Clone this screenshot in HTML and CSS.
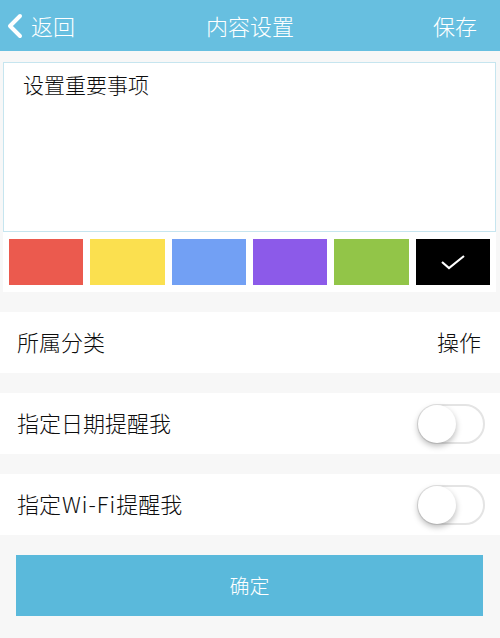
FILE: index.html
```html
<!DOCTYPE html>
<html lang="zh-CN">
<head>
  <meta charset="UTF-8">
  <meta name="viewport" content="width=device-width, initial-scale=1.0">
  <title>内容设置</title>
  <link rel="stylesheet" href="styles.css">
</head>
<body>
  <header class="topbar">
    <div class="back">
      <svg class="chevron" width="18" height="26" viewBox="0 0 18 26">
        <polyline points="14,3 4,13 14,23" fill="none" stroke="#fff" stroke-width="4" stroke-linecap="round" stroke-linejoin="round"/>
      </svg>
      <span>返回</span>
    </div>
    <h1 class="title">内容设置</h1>
    <div class="save">保存</div>
  </header>

  <section class="editor">
    <p class="editor-text">设置重要事项</p>
  </section>

  <section class="swatches">
    <div class="swatch red"></div>
    <div class="swatch yellow"></div>
    <div class="swatch blue"></div>
    <div class="swatch purple"></div>
    <div class="swatch green"></div>
    <div class="swatch black">
      <svg width="26" height="16" viewBox="0 0 26 16">
        <polyline points="2,8 9,14 24,2" fill="none" stroke="#fff" stroke-width="2.2"/>
      </svg>
    </div>
  </section>

  <div class="row">
    <span class="label">所属分类</span>
    <span class="value">操作</span>
  </div>

  <div class="row">
    <span class="label">指定日期提醒我</span>
    <div class="toggle"><div class="knob"></div></div>
  </div>

  <div class="row">
    <span class="label">指定<span class="latin">Wi-Fi</span>提醒我</span>
    <div class="toggle"><div class="knob"></div></div>
  </div>

  <button class="confirm">确定</button>
</body>
</html>
```

FILE: styles.css
```css
* {
  margin: 0;
  padding: 0;
  box-sizing: border-box;
}

body {
  font-family: "Noto Sans CJK SC", "Noto Sans", sans-serif;
  font-weight: 300;
  background-color: #f7f7f7;
  color: #0d0d0d;
}

/* barre du haut */
.topbar {
  height: 51px;
  background: #67bfe0;
  color: #fff;
  display: grid;
  grid-template-columns: 1fr auto 1fr;
  align-items: center;
  font-size: 22px;
  padding-bottom: 2px;
}

.back {
  display: flex;
  align-items: center;
  padding-left: 6px;
}

.chevron {
  margin-right: 7px;
  margin-top: 2px;
}

.title {
  font-size: 22px;
  font-weight: 300;
}

.save {
  justify-self: end;
  padding-right: 23px;
}

/* zone de texte */
.editor {
  margin: 11px 4px 0 3px;
  height: 170px;
  background: #fff;
  border: 1px solid #c6e5ef;
  padding: 7px 19px;
}

.editor-text {
  font-size: 21px;
  line-height: 28px;
}

/* couleurs */
.swatches {
  margin: 0 4px 0 3px;
  background: #fff;
  padding: 7px 6px;
  display: flex;
  gap: 7px;
}

.swatch {
  flex: 1;
  height: 46px;
  display: flex;
  align-items: center;
  justify-content: center;
}

.red { background: #eb5a4e; }
.yellow { background: #fbe04f; }
.blue { background: #72a0f4; }
.purple { background: #8c5ae9; }
.green { background: #92c548; }
.black { background: #000; }

/* lignes */
.row {
  margin-top: 20px;
  height: 61px;
  background: #fff;
  display: flex;
  align-items: center;
  justify-content: space-between;
  padding: 0 15px 3px 17px;
  font-size: 22px;
}

.latin {
  letter-spacing: 1px;
  margin-left: 1px;
}

.value {
  margin-right: 4px;
}

.toggle {
  width: 68px;
  height: 40px;
  border: 2px solid #e4e4e4;
  border-radius: 20px;
  position: relative;
  background: #fff;
  margin-top: 3px;
}

.knob {
  position: absolute;
  left: -1px;
  top: -1px;
  width: 38px;
  height: 38px;
  border-radius: 50%;
  background: #fff;
  box-shadow: 0 3px 6px rgba(0, 0, 0, 0.28);
}

/* bouton */
.confirm {
  display: block;
  margin: 20px 17px 0 16px;
  width: calc(100% - 33px);
  height: 61px;
  border: none;
  background: #5ab9db;
  color: #fff;
  font-family: inherit;
  font-weight: 300;
  font-size: 20px;
}
```
